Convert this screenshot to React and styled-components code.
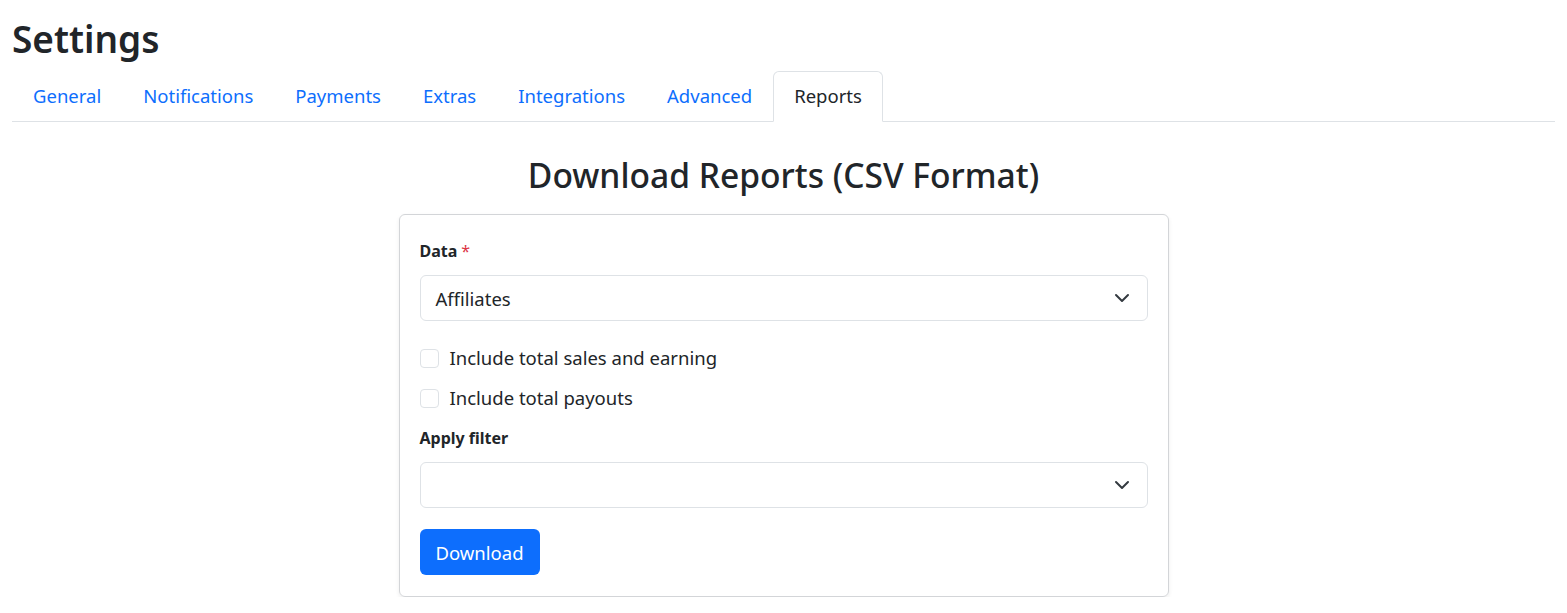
import React from 'react';
import styled, { createGlobalStyle } from 'styled-components';

const GlobalStyle = createGlobalStyle`
  body {
    margin: 0;
    background: #fff;
    color: #212529;
    font-family: "Noto Sans", "Open Sans", sans-serif;
  }
  * { box-sizing: border-box; }
`;

const Page = styled.div`
  padding: 0 12px;
`;

const Title = styled.h1`
  margin: 0;
  padding-top: 15px;
  height: 71px;
  font-size: 37px;
  font-weight: 600;
  line-height: 48px;
`;

const Tabs = styled.ul`
  display: flex;
  margin: 0;
  padding: 0;
  list-style: none;
  border-bottom: 1px solid #dee2e6;
`;

const Tab = styled.li`
  margin-bottom: -1px;
  padding: 12px 20px 13px;
  font-size: 18.5px;
  line-height: 24px;
  border: 1px solid ${p => (p.$active ? '#dee2e6' : 'transparent')};
  border-bottom-color: ${p => (p.$active ? '#fff' : 'transparent')};
  border-radius: 6px 6px 0 0;
  background: ${p => (p.$active ? '#fff' : 'transparent')};
  color: ${p => (p.$active ? '#212529' : '#0d6efd')};
  cursor: pointer;
`;

const Heading = styled.h2`
  margin: 33px 0 19px;
  text-align: center;
  font-size: 33.6px;
  font-weight: 500;
  line-height: 40px;
`;

const Card = styled.div`
  width: 770px;
  margin: 0 auto;
  padding: 23px 20px 21px;
  border: 1px solid #d3d5d8;
  border-radius: 6px;
  box-shadow: 0 2px 4px rgba(0, 0, 0, 0.075);
`;

const Label = styled.div`
  margin-bottom: 11px;
  font-size: 16px;
  font-weight: 700;
  line-height: 26px;
`;

const Req = styled.span`
  margin-left: 4px;
  color: #dc3545;
  font-weight: 400;
`;

const SelectBox = styled.div`
  position: relative;
  display: flex;
  align-items: center;
  height: 46px;
  padding: 0 48px 0 15px;
  border: 1px solid #dee2e6;
  border-radius: 6px;
  font-size: 18.5px;
`;

const Chevron = styled.svg`
  position: absolute;
  right: 17px;
  top: 50%;
  width: 16px;
  height: 16px;
  margin-top: -8px;
`;

const CheckRow = styled.label`
  display: flex;
  align-items: center;
  gap: 11px;
  margin-top: ${p => p.$first ? '24px' : '14px'};
  font-size: 18.5px;
  line-height: 26px;
`;

const Box = styled.span`
  width: 19px;
  height: 19px;
  border: 1px solid #dee2e6;
  border-radius: 4px;
  background: #fff;
`;

const Group = styled.div`
  margin-top: 14px;
`;

const Button = styled.button`
  margin-top: 21px;
  height: 46px;
  padding: 0 16px;
  border: none;
  border-radius: 6px;
  background: #0d6efd;
  color: #fff;
  font-family: inherit;
  font-size: 18.5px;
`;

const Select = ({ value }) => (
  <SelectBox>
    {value}
    <Chevron viewBox="0 0 16 16" fill="none" stroke="#343a40" strokeWidth="2" strokeLinecap="round" strokeLinejoin="round">
      <path d="m2 5 6 6 6-6" />
    </Chevron>
  </SelectBox>
);

const tabs = ['General', 'Notifications', 'Payments', 'Extras', 'Integrations', 'Advanced', 'Reports'];

export default function App() {
  return (
    <Page>
      <GlobalStyle />
      <Title>Settings</Title>
      <Tabs>
        {tabs.map(t => (
          <Tab key={t} $active={t === 'Reports'}>{t}</Tab>
        ))}
      </Tabs>
      <Heading>Download Reports (CSV Format)</Heading>
      <Card>
        <Label>Data<Req>*</Req></Label>
        <Select value="Affiliates" />
        <CheckRow $first><Box />Include total sales and earning</CheckRow>
        <CheckRow><Box />Include total payouts</CheckRow>
        <Group>
          <Label>Apply filter</Label>
          <Select value="" />
        </Group>
        <Button>Download</Button>
      </Card>
    </Page>
  );
}
